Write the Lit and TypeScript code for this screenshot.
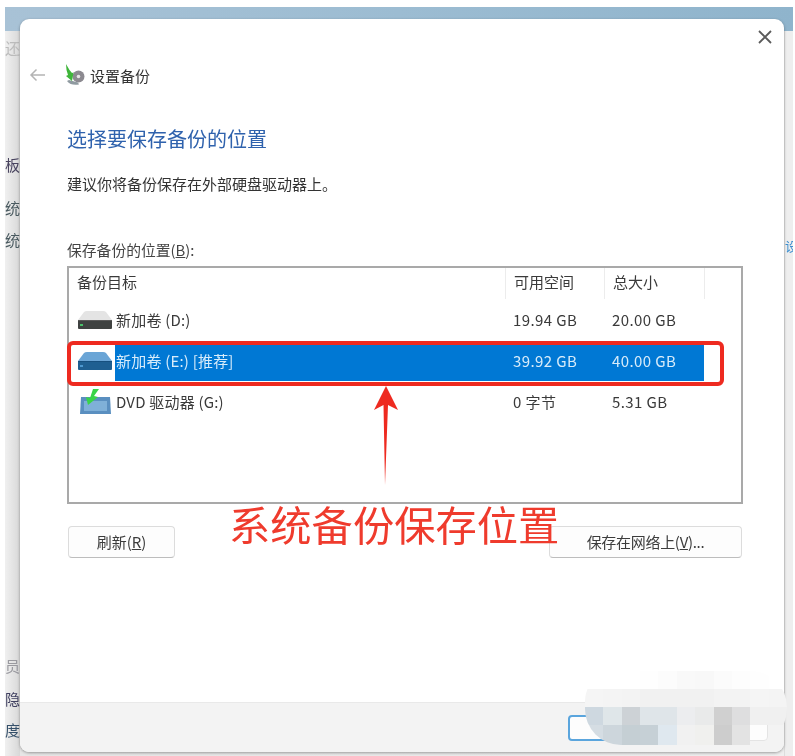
import { LitElement, html, css, svg } from "lit";
import { customElement } from "lit/decorators.js";

const hdd = (top: string, side: string, body: string, led: string) => svg`
  <svg class="drive" viewBox="0 0 36 20" width="36" height="20">
    <path d="M1 10 L7 2 Q8 1 10 1 H26 Q28 1 29 2 L35 10 Z" fill="${top}"/>
    <path d="M1 10 H35 V18 Q35 19 34 19 H2 Q1 19 1 18 Z" fill="${body}"/>
    <path d="M1 10 H35 V11 H1 Z" fill="${side}"/>
    <rect x="3" y="14" width="3" height="2" fill="${led}"/>
  </svg>`;

const T = "transparent";
const MOSAIC = [
  [T, T, T, "#fefefe", "#fcfcfc", "#f9f9f9", "#f8f8f8", "#fbfbfb", "#fdfdfd", "#fefefe", T],
  ["#f5f5f5", "#f4f4f4", "#f3f3f3", "#f1f1f1", "#f1f1f1", "#f1f1f1", "#f1f1f1", "#f3f3f3", "#f3f3f3", "#f5f5f5", "#f4f4f4"],
  ["#ced8e0", "#dfe6e9", "#cdd2d6", "#dfe5e9", "#dfe5e9", "#ecedef", "#e9eaea", "#d0d0d0", "#dededf", "#f0f0f0", "#f0f0f0"],
  ["#d5dde3", "#cdd6dc", "#c5cfd4", "#c6d0d6", "#dfe8ef", "#f1f1f1", "#f0f0ee", "#cdcdcd", "#e3e3e3", T, T],
];

@customElement("app-root")
export class AppRoot extends LitElement {
  static styles = css`
    :host {
      display: block;
      width: 795px;
      height: 756px;
      overflow: hidden;
      background: #fff;
      font-family: "Noto Sans CJK SC", "Noto Sans", sans-serif;
      color: #333;
    }
    .stage {
      position: relative;
      width: 795px;
      height: 756px;
      filter: blur(0.7px);
    }
    .backdrop {
      position: absolute;
      left: 5px;
      top: 7px;
      right: 2px;
      bottom: 0;
      display: flex;
      flex-direction: column;
      background: linear-gradient(90deg, #e6e6e6 0, #efefef 100%);
    }
    .titlebar {
      height: 24px;
      flex: none;
      background: linear-gradient(90deg, #a8c2d6 0%, #9cbcd2 50%, #8fb4cc 100%);
    }
    .sides {
      flex: 1;
      display: flex;
      justify-content: space-between;
      min-height: 0;
    }
    .leftstrip {
      width: 15px;
      display: flex;
      flex-direction: column;
      background: linear-gradient(90deg, #f0f0f0, #d8d8d8);
      font-size: 15px;
      line-height: 18px;
      overflow: hidden;
    }
    .frag {
      flex: none;
      width: 15px;
      height: 18px;
      display: flex;
      justify-content: flex-end;
      white-space: nowrap;
      color: #444;
      overflow: hidden;
    }
    .f1 { margin-top: 8px; color: #bbb; }
    .f2 { margin-top: 99px; color: #4a4560; }
    .f3 { margin-top: 25px; color: #4a5a60; }
    .f4 { margin-top: 14px; color: #4a5a60; }
    .f5 { margin-top: 408px; color: #9a9aa0; }
    .f6 { margin-top: 15px; color: #404060; }
    .f7 { margin-top: 13px; color: #35506a; }
    .rightstrip {
      width: 9px;
      background: #eeeeee;
      border-left: 1px solid #ddd;
      box-sizing: border-box;
      font-size: 13px;
      color: #3d8fd0;
      overflow: hidden;
    }
    .rfrag { margin-top: 206px; white-space: nowrap; height: 18px; line-height: 18px; }

    .dialog {
      position: absolute;
      left: 20px;
      top: 19px;
      width: 764px;
      height: 733px;
      background: #fff;
      border-radius: 9px;
      box-shadow: 0 1px 3px rgba(0,0,0,.35);
      display: flex;
      flex-direction: column;
      overflow: hidden;
    }
    .content {
      flex: 1;
      min-height: 0;
      display: flex;
      flex-direction: column;
      padding: 0 41px 0 47px;
    }
    .closerow { display: flex; justify-content: flex-end; height: 26px; padding: 10px 11px 0 0; margin-right: -41px; flex: none; }
    .nav {
      display: flex;
      align-items: center;
      height: 26px;
      margin: 7px 0 0 -38px;
      font-size: 15px;
      flex: none;
    }
    .nav .back { margin-right: 18px; }
    .nav .appicon { margin-right: 4px; }
    h1 {
      margin: 37px 0 0;
      font-weight: 400;
      font-size: 20px;
      line-height: 28px;
      color: #2f62ad;
      flex: none;
    }
    .desc { margin: 20px 0 0; font-size: 15px; line-height: 22px; flex: none; color: #333; }
    .label { margin: 44px 0 0; font-size: 14.8px; line-height: 22px; flex: none; color: #444; }
    .u { text-decoration: underline; }
    .table {
      margin-top: 5px;
      height: 238px;
      width: 676px;
      box-sizing: border-box;
      border: 2px solid #a9a9a9;
      flex: none;
      font-size: 15px;
      color: #3a3a3a;
    }
    .row, .head {
      display: grid;
      grid-template-columns: 436px 99px 100px 37px;
      align-items: center;
    }
    .head { height: 31px; }
    .head > div { height: 31px; line-height: 28px; padding-left: 8px; box-sizing: border-box; border-left: 1px solid #ececec; }
    .head > div:first-child { border-left: 0; }
    .rows { display: flex; flex-direction: column; }
    .row { height: 41px; }
    .cell { padding-left: 8px; line-height: 36px; height: 36px; letter-spacing: 0.4px; }
    .name { display: flex; align-items: center; height: 36px; padding-left: 8px; box-sizing: border-box; letter-spacing: 0.2px; }
    .iconbox { width: 39px; flex: none; display: flex; align-items: center; }
    .drive { display: block; }
    .row.sel .cell { background: #0078d4; color: #d8ecfa; margin-top: 4px; line-height: 32px; }
    .row.sel .name {
      background: linear-gradient(90deg, #fff 46px, #0078d4 46px);
      color: #d8ecfa;
      margin-top: 4px;
      padding-bottom: 4px;
    }
    .buttons {
      margin-top: 22px;
      width: 674px;
      margin-left: 1px;
      display: flex;
      justify-content: space-between;
      flex: none;
    }
    .btn {
      height: 32px;
      box-sizing: border-box;
      border: 1px solid #dcdcdc;
      border-bottom-color: #bdbdbd;
      border-radius: 4px;
      background: #fdfdfd;
      font-size: 15px;
      line-height: 30px;
      text-align: center;
      color: #3c3c3c;
    }
    .refresh { width: 107px; }
    .network { width: 193px; letter-spacing: -0.3px; }
    .footer {
      flex: none;
      height: 50px;
      background: #f3f3f3;
      border-top: 1px solid #e9e9e9;
      box-sizing: border-box;
      display: flex;
      justify-content: flex-end;
      align-items: flex-end;
      gap: 12px;
      padding: 0 16px 11px 0;
    }
    .fbtn { height: 26px; box-sizing: border-box; border-radius: 4px; background: #fdfdfd; }
    .ok { width: 108px; border: 2px solid #5aa5dd; }
    .cancel { width: 80px; border: 1px solid #e4e4e4; }

    .redbox {
      position: absolute;
      left: 67px;
      top: 341px;
      width: 657px;
      height: 45px;
      box-sizing: border-box;
      border: 4px solid #ee2a20;
      border-radius: 6px;
    }
    .arrow { position: absolute; left: 372px; top: 384px; }
    .note {
      position: absolute;
      left: 229px;
      top: 494px;
      font-size: 41.3px;
      line-height: 58px;
      color: #ef3b2d;
      white-space: nowrap;
    }
    .mosaic {
      position: absolute;
      left: 585px;
      top: 671px;
      width: 202px;
      height: 74px;
      border-radius: 30px 36px 36px 36px;
      overflow: hidden;
      display: grid;
      grid-template-columns: repeat(11, 18.36px);
      grid-template-rows: 18px 18px 18px 20px;
    }
  `;

  render() {
    return html`
      <div class="stage">
        <div class="backdrop">
          <div class="titlebar"></div>
          <div class="sides">
            <div class="leftstrip">
              <div class="frag f1">还</div>
              <div class="frag f2">板</div>
              <div class="frag f3">统</div>
              <div class="frag f4">统</div>
              <div class="frag f5">员</div>
              <div class="frag f6">隐</div>
              <div class="frag f7">度</div>
            </div>
            <div class="rightstrip"><div class="rfrag">设</div></div>
          </div>
        </div>

        <div class="dialog">
          <div class="content">
            <div class="closerow">
              <svg width="16" height="16" viewBox="0 0 16 16"><path d="M2 2 L14 14 M14 2 L2 14" stroke="#5a5a5a" stroke-width="1.8" fill="none"/></svg>
            </div>
            <div class="nav">
              <svg class="back" width="17" height="14" viewBox="0 0 17 14"><path d="M16 7 H2 M7.5 1.5 L2 7 L7.5 12.5" stroke="#b4b4b4" stroke-width="1.5" fill="none"/></svg>
              <svg class="appicon" width="22" height="22" viewBox="0 0 22 22">
                <circle cx="14.5" cy="12.5" r="6" fill="#8c8a90"/>
                <circle cx="14.5" cy="12.5" r="1.8" fill="#e6e6e6"/>
                <path d="M3 17 Q7 22 15 20.5 L14 18.5 L5 16 Z" fill="#8f9aa0"/>
                <path d="M2 0 L5.5 6 L8 9 L9.5 8.5 L8 17 L2 12 L4 11 L2.5 6 Z" fill="#3fb53a"/>
              </svg>
              <span>设置备份</span>
            </div>
            <h1>选择要保存备份的位置</h1>
            <p class="desc">建议你将备份保存在外部硬盘驱动器上。</p>
            <div class="label">保存备份的位置(<span class="u">B</span>):</div>
            <div class="table">
              <div class="head">
                <div>备份目标</div><div>可用空间</div><div>总大小</div><div></div>
              </div>
              <div class="rows">
                <div class="row">
                  <div class="name"><span class="iconbox">${hdd("#e4e4e4", "#5a5a5a", "#3f4241", "#49c06a")}</span>新加卷 (D:)</div>
                  <div class="cell">19.94 GB</div><div class="cell">20.00 GB</div><div></div>
                </div>
                <div class="row sel">
                  <div class="name"><span class="iconbox">${hdd("#6aa5d6", "#17507f", "#1f5f91", "#4d97cf")}</span>新加卷 (E:) [推荐]</div>
                  <div class="cell">39.92 GB</div><div class="cell">40.00 GB</div><div></div>
                </div>
                <div class="row">
                  <div class="name"><span class="iconbox">
                    <svg class="drive" viewBox="0 0 36 26" width="36" height="26">
                      <path d="M4 8 H33 L34 25 H3 Z" fill="#5a8fc0"/>
                      <path d="M7 12 H30 V22 H7 Z" fill="#7fb0d8"/>
                      <path d="M22 0 L17 7 L21 8 L11 16 L9 8 L13 9 L16 0 Z" fill="#38d448"/>
                    </svg>
                  </span>DVD 驱动器 (G:)</div>
                  <div class="cell">0 字节</div><div class="cell">5.31 GB</div><div></div>
                </div>
              </div>
            </div>
            <div class="buttons">
              <div class="btn refresh">刷新(<span class="u">R</span>)</div>
              <div class="btn network">保存在网络上(<span class="u">V</span>)...</div>
            </div>
          </div>
          <div class="footer">
            <div class="fbtn ok"></div>
            <div class="fbtn cancel"></div>
          </div>
        </div>

        <div class="redbox"></div>
        <svg class="arrow" width="28" height="102" viewBox="0 0 28 102">
          <path d="M14 2 L26 26 L16 21 L13 101 L11.5 21 L2 26 Z" fill="#ee2a20"/>
        </svg>
        <div class="note">系统备份保存位置</div>
        <div class="mosaic">
          ${MOSAIC.flat().map((c) => html`<div style="background:${c}"></div>`)}
        </div>
      </div>
    `;
  }
}
